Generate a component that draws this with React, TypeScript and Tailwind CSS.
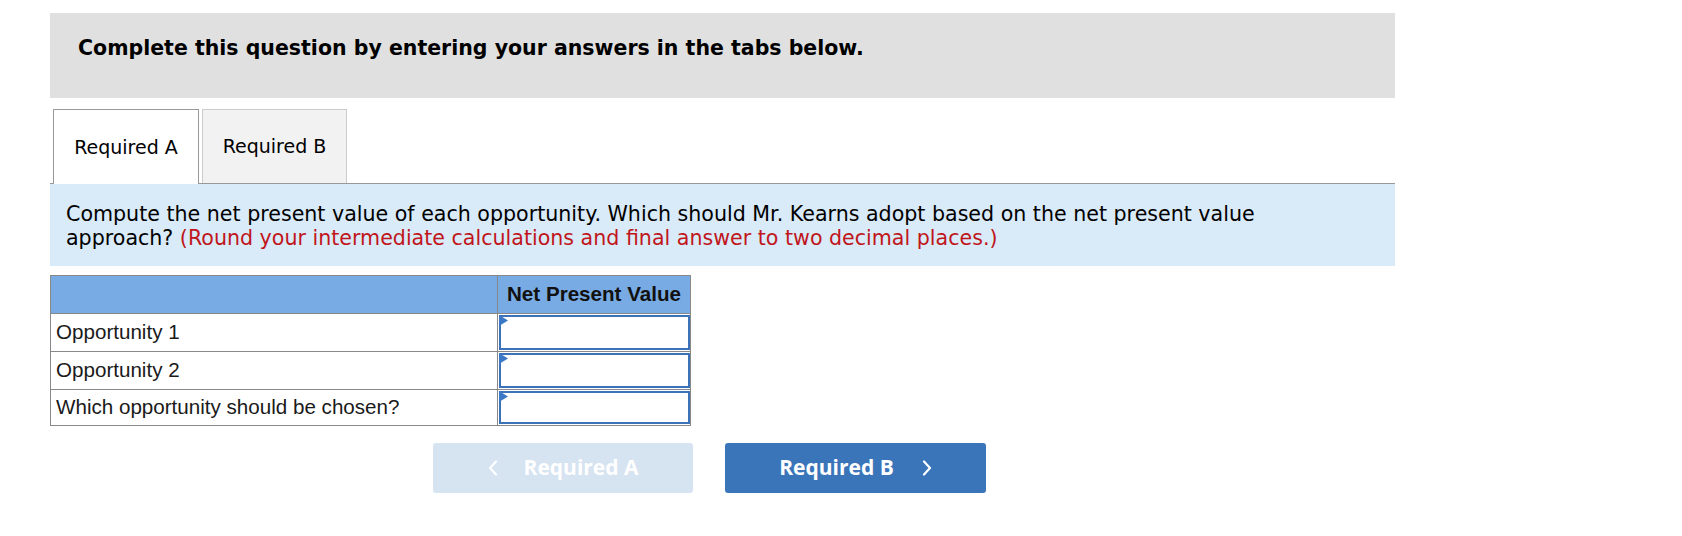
import React from "react";

const tahoma = "font-['DejaVu_Sans',sans-serif]";
const arial = "font-['Liberation_Sans',Arial,sans-serif]";

const rows = ["Opportunity 1", "Opportunity 2", "Which opportunity should be chosen?"];

function Chevron({ dir }: { dir: "left" | "right" }) {
  return (
    <svg width="10" height="16" viewBox="0 0 10 16" className="shrink-0">
      <polyline
        points={dir === "left" ? "8,1.5 2,8 8,14.5" : "2,1.5 8,8 2,14.5"}
        fill="none"
        stroke="#ffffff"
        strokeWidth="2.2"
        strokeLinecap="round"
        strokeLinejoin="round"
      />
    </svg>
  );
}

export default function App() {
  return (
    <div className="min-h-[536px] bg-white pl-[50px] pt-[13px]">
      <div className="w-[1345px]">
        {/* header */}
        <div className="h-[85px] bg-[#e0e0e0] pl-[28px] pt-[23px]">
          <p className={`${tahoma} text-[20.5px] font-bold leading-[24px] text-black`}>
            Complete this question by entering your answers in the tabs below.
          </p>
        </div>

        {/* tabs */}
        <div className="mt-[11px] flex h-[75px] gap-[3px] border-b border-[#999999] pl-[3px]">
          <div
            className={`${tahoma} relative -mb-px flex h-[75px] w-[146px] items-center justify-center border border-b-0 border-[#999999] bg-white text-[19px] text-black`}
          >
            Required A
          </div>
          <div
            className={`${tahoma} flex h-[74px] w-[145px] items-center justify-center border border-b-0 border-[#cccccc] bg-[#f2f2f2] text-[19px] text-black`}
          >
            Required B
          </div>
        </div>

        {/* instructions */}
        <div className="h-[82px] bg-[#d9eaf8] pl-[16px] pr-[80px] pt-[18px]">
          <p className={`${tahoma} text-[20.6px] leading-[24px] text-black`}>
            Compute the net present value of each opportunity. Which should Mr. Kearns adopt based on the net present value
            approach? <span className="text-[#c0161c]">(Round your intermediate calculations and final answer to two decimal places.)</span>
          </p>
        </div>

        {/* answer table */}
        <div className={`${arial} mt-[9px] w-[641px] border border-[#888888] text-[20.6px] text-[#1a1a1a]`}>
          <div className="grid h-[37px] grid-cols-[447px_1fr] bg-[#78abe3]">
            <div className="border-r border-[#888888]" />
            <div className="flex items-center justify-center font-bold text-[#111111]">Net Present Value</div>
          </div>
          {rows.map((label, i) => (
            <div
              key={label}
              className={`grid grid-cols-[447px_1fr] border-t border-[#888888] ${i === 2 ? "h-[36px]" : "h-[38px]"}`}
            >
              <div className="flex items-center border-r border-[#888888] pl-[5px]">{label}</div>
              <div className="py-px pl-px">
                <div className="relative h-full border-2 border-[#3c72b8] bg-white">
                  <svg width="10" height="12" viewBox="0 0 10 12" className="absolute -left-[2px] -top-[2px]">
                    <polygon points="0,0 9,5.5 0,11" fill="#3b78c6" />
                  </svg>
                </div>
              </div>
            </div>
          ))}
        </div>

        {/* nav buttons */}
        <div className="ml-[383px] mt-[17px] flex gap-[32px] font-['Open_Sans',sans-serif] text-[21px] font-bold text-white">
          <button className="flex h-[50px] w-[260px] items-center justify-center gap-[26px] rounded-[3px] bg-[#d6e3f1]">
            <Chevron dir="left" />
            <span>Required A</span>
          </button>
          <button className="flex h-[50px] w-[261px] items-center justify-center gap-[28px] rounded-[3px] bg-[#3a75ba]">
            <span>Required B</span>
            <Chevron dir="right" />
          </button>
        </div>
      </div>
    </div>
  );
}
